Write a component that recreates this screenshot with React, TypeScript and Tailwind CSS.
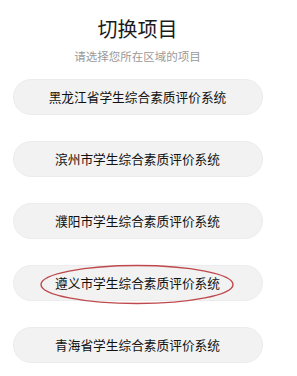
import React from "react";

const items = [
  "黑龙江省学生综合素质评价系统",
  "滨州市学生综合素质评价系统",
  "濮阳市学生综合素质评价系统",
  "遵义市学生综合素质评价系统",
  "青海省学生综合素质评价系统",
];

export default function App() {
  return (
    <div
      className="w-[297px] h-[376px] bg-white flex flex-col items-center overflow-hidden pr-[22px]"
      style={{ fontFamily: '"Noto Sans CJK SC", "Noto Sans", sans-serif' }}
    >
      <div className="mt-[15px] text-[20px] leading-[28px] text-[#1a1a1a]">切换项目</div>
      <div className="mt-[5px] text-[11.5px] leading-[16px] text-[#9a9a9a]">请选择您所在区域的项目</div>
      <div className="mt-[15px] flex flex-col gap-[26px] w-[250px]">
        {items.map((t, i) => (
          <div
            key={t}
            className="relative h-[36px] rounded-full bg-[#f2f2f2] border border-[#ececec] flex items-center justify-center text-[12.7px] text-[#111111]"
          >
            {t}
            {i === 3 && (
              <svg
                className="absolute left-[25px] top-[-2px] pointer-events-none"
                width="196"
                height="42"
                viewBox="0 0 196 42"
              >
                <ellipse
                  cx="98"
                  cy="20.5"
                  rx="96"
                  ry="19"
                  fill="none"
                  stroke="#b8353a"
                  strokeWidth="1.4"
                  opacity="0.9"
                />
              </svg>
            )}
          </div>
        ))}
      </div>
    </div>
  );
}
